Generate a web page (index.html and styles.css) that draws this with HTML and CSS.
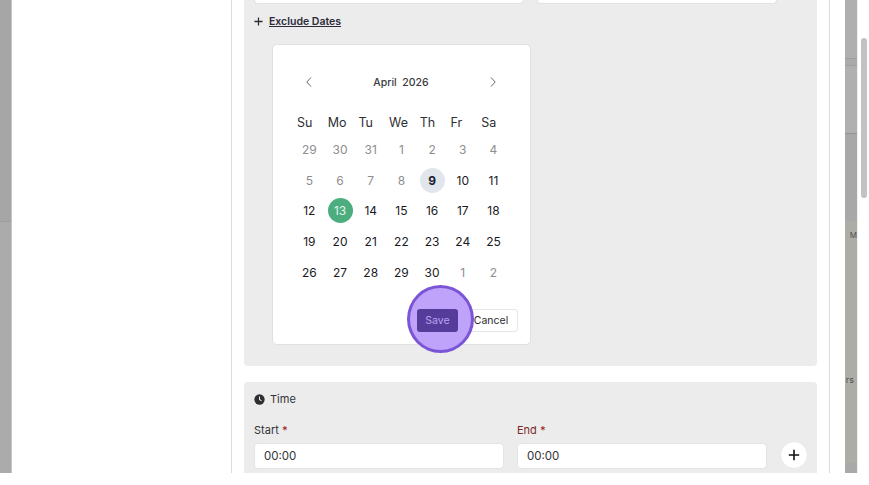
FILE: index.html
```html
<!DOCTYPE html>
<html lang="en">
<head>
  <meta charset="UTF-8">
  <title>Exclude Dates</title>
  <link rel="stylesheet" href="styles.css">
</head>
<body>
  <div class="frame">
    <div class="strip-left"><div class="strip-dark"></div></div>
    <div class="sidebar"></div>
    <div class="main">
      <section class="panel panel-date">
        <div class="row-inputs">
          <div class="input-stub input-stub-a"></div>
          <div class="input-stub input-stub-b"></div>
        </div>
        <div class="exclude">
          <svg class="plus-small" viewBox="0 0 10 10"><path d="M5 .5v9M.5 5h9"/></svg>
          <a class="exclude-link">Exclude Dates</a>
        </div>
        <div class="calendar">
          <div class="cal-nav">
            <svg class="chev" viewBox="0 0 8 12"><path d="M6 1.5 1.8 6 6 10.5"/></svg>
            <span class="cal-title">April&nbsp; 2026</span>
            <svg class="chev" viewBox="0 0 8 12"><path d="M2 1.5 6.2 6 2 10.5"/></svg>
          </div>
          <div class="cal-grid cal-head">
            <span>Su</span><span>Mo</span><span>Tu</span><span>We</span><span>Th</span><span>Fr</span><span>Sa</span>
          </div>
          <div class="cal-grid cal-days">
            <span class="off">29</span><span class="off">30</span><span class="off">31</span><span class="off">1</span><span class="off">2</span><span class="off">3</span><span class="off">4</span>
            <span class="off">5</span><span class="off">6</span><span class="off">7</span><span class="off">8</span><span class="today">9</span><span>10</span><span>11</span>
            <span>12</span><span class="picked">13</span><span>14</span><span>15</span><span>16</span><span>17</span><span>18</span>
            <span>19</span><span>20</span><span>21</span><span>22</span><span>23</span><span>24</span><span>25</span>
            <span>26</span><span>27</span><span>28</span><span>29</span><span>30</span><span class="off">1</span><span class="off">2</span>
          </div>
          <div class="cal-actions">
            <button class="btn-save">Save</button>
            <button class="btn-cancel">Cancel</button>
            <div class="spot"></div>
          </div>
        </div>
      </section>
      <section class="panel panel-time">
        <div class="time-title">
          <svg class="clock" viewBox="0 0 12 12"><circle cx="6" cy="6" r="5.6"/><path d="M6 2.8V6l2.2 1.6"/></svg>
          <span>Time</span>
        </div>
        <div class="time-row">
          <div class="field field-start">
            <label>Start <b>*</b></label>
            <div class="time-input">00:00</div>
          </div>
          <div class="field field-end">
            <label class="label-error">End <b>*</b></label>
            <div class="time-input">00:00</div>
          </div>
          <div class="add-btn">
            <svg viewBox="0 0 12 12"><path d="M6 .8v10.4M.8 6h10.4"/></svg>
          </div>
        </div>
      </section>
    </div>
    <div class="gutter"></div>
    <div class="strip-right">
      <div class="sr-a"></div>
      <div class="sr-b"></div>
      <div class="sr-c"></div>
      <div class="sr-d"></div>
      <div class="sr-e">
        <span class="sr-m">M</span>
        <span class="sr-rs">rs</span>
      </div>
      <div class="sr-f"></div>
    </div>
    <div class="scrollbar"><div class="thumb"></div></div>
  </div>
</body>
</html>
```

FILE: styles.css
```css
html, body {
  margin: 0;
  height: 100%;
  background: #fff;
  overflow: hidden;
}
body {
  font-family: 'Inter', 'Liberation Sans', sans-serif;
  color: #2a2a2e;
}
.frame {
  display: flex;
  height: 473px;
  overflow: hidden;
}
.strip-left {
  width: 12px;
  background: #ababab;
  border-right: 1px solid #c4c4c4;
  box-sizing: border-box;
}
.strip-dark {
  height: 221px;
  background: #a6a6a6;
  border-bottom: 1px solid #9f9f9f;
}
.sidebar {
  width: 219px;
  background: #fff;
}
.main {
  width: 599px;
  box-sizing: border-box;
  border-left: 1px solid #dcdcdc;
  border-right: 1px solid #dcdcdc;
  padding: 0 12px;
  background: #fff;
}
.panel {
  background: #ececec;
  border-radius: 0 0 4px 4px;
  padding: 0 10px;
}
.panel-date {
  height: 366px;
}
.panel-time {
  margin-top: 16px;
  height: 91px;
  padding-right: 9px;
  border-radius: 4px 4px 0 0;
}
.row-inputs {
  display: flex;
  gap: 13px;
}
.input-stub {
  height: 4px;
  background: #fff;
  border: 1px solid #e2e2e2;
  border-top: 0;
  border-radius: 0 0 5px 5px;
  box-sizing: border-box;
}
.input-stub-a { width: 270px; }
.input-stub-b { width: 240px; }
.exclude {
  display: flex;
  align-items: center;
  gap: 6px;
  height: 16px;
  margin-top: 9px;
}
.plus-small {
  width: 9px;
  height: 9px;
  fill: none;
  stroke: #2c2c34;
  stroke-width: 1.4;
}
.exclude-link {
  font-size: 10.5px;
  font-weight: 600;
  color: #2b2b3a;
  text-decoration: underline;
}
.calendar {
  width: 259px;
  height: 301px;
  margin: 15px 0 0 18px;
  box-sizing: border-box;
  background: #fff;
  border: 1px solid #e0e0e0;
  border-radius: 5px;
  padding: 27px 12px 0 21px;
}
.cal-nav {
  display: flex;
  justify-content: space-between;
  align-items: center;
  height: 20px;
  width: 192px;
  padding-left: 11px;
}
.chev {
  width: 8px;
  height: 12px;
  fill: none;
  stroke: #666;
  stroke-width: 1;
}
.cal-title {
  font-size: 10.5px;
  font-weight: 500;
  color: #3a3a3f;
}
.cal-grid {
  display: grid;
  grid-template-columns: repeat(7, 30.7px);
}
.cal-head {
  margin-top: 20px;
  height: 20px;
  align-items: center;
}
.cal-head span {
  padding-left: 3px;
  font-size: 12.5px;
  font-weight: 400;
  color: #2f2f33;
}
.cal-days {
  margin-top: 2px;
  grid-auto-rows: 30.7px;
}
.cal-days span {
  display: flex;
  align-items: center;
  justify-content: center;
  font-size: 12px;
  font-weight: 400;
  color: #1a1a1e;
}
.cal-days .off {
  color: #8e8e8e;
}
.cal-days .today {
  width: 25px;
  height: 25px;
  margin: auto;
  border-radius: 50%;
  background: #e1e5ec;
  font-weight: 700;
  color: #1d2230;
}
.cal-days .picked {
  width: 25px;
  height: 25px;
  margin: auto;
  border-radius: 50%;
  background: #4cad7f;
  color: #e6f5ee;
}
.cal-actions {
  position: relative;
  display: flex;
  justify-content: flex-end;
  gap: 6px;
  margin-top: 22px;
}
.cal-actions button {
  height: 23px;
  border-radius: 3px;
  font-family: inherit;
  font-size: 10.5px;
  padding: 0;
}
.btn-save {
  position: relative;
  z-index: 2;
  width: 41px;
  background: #553c9a;
  border: 0;
  color: #b9a2ee;
}
.btn-cancel {
  width: 54px;
  background: #fff;
  border: 1px solid #e6e6e6;
  color: #2a2a2e;
}
/* highlight ring round the Save button */
.spot {
  position: absolute;
  z-index: 1;
  right: 44px;
  top: -24px;
  width: 67px;
  height: 68px;
  box-sizing: border-box;
  border: 3px solid #7a55d6;
  border-radius: 50%;
  background: #bfa3fa;
}
.time-title {
  display: flex;
  align-items: center;
  gap: 5px;
  padding-top: 9px;
  height: 16px;
  font-size: 11px;
  color: #333338;
}
.clock {
  width: 11px;
  height: 11px;
}
.clock circle { fill: #2f2f33; }
.clock path {
  fill: none;
  stroke: #ececec;
  stroke-width: 1.1;
}
.time-row {
  display: flex;
  align-items: flex-end;
  margin-top: 16px;
}
.field label {
  display: block;
  font-size: 11px;
  color: #333338;
  margin-bottom: 5px;
  height: 15px;
}
.field label b {
  font-weight: 500;
  color: #a11d1d;
}
.field .label-error { color: #7a2a2a; }
.field-start { width: 250px; margin-right: 13px; }
.field-end { width: 250px; margin-right: 14px; }
.time-input {
  height: 26px;
  line-height: 25px;
  box-sizing: border-box;
  background: #fff;
  border: 1px solid #e4e4e4;
  border-radius: 4px;
  padding-left: 9px;
  font-size: 11.5px;
  color: #333338;
}
.add-btn {
  flex: none;
  width: 28px;
  height: 28px;
  margin-left: -1px;
  box-sizing: border-box;
  border-radius: 50%;
  background: #fff;
  border: 1px solid #e8e8e8;
  display: flex;
  align-items: center;
  justify-content: center;
}
.add-btn svg {
  width: 12px;
  height: 12px;
  fill: none;
  stroke: #111;
  stroke-width: 1.6;
}
.gutter {
  width: 15px;
  background: #fff;
}
.strip-right {
  width: 12px;
  display: flex;
  flex-direction: column;
}
.sr-a { height: 58px; background: #afafaf; border-bottom: 1px solid #9d9d9d; }
.sr-b { height: 6px; background: #aaa; border-bottom: 1px solid #a0a0a0; }
.sr-c { height: 67px; background: #b0b0b0; border-bottom: 1px solid #939393; }
.sr-d { height: 87px; background: #a8a8a8; }
.sr-e {
  flex: 1;
  display: flex;
  flex-direction: column;
  align-items: flex-end;
  background: #adada8;
  font-size: 8px;
  color: #4f4f4f;
  overflow: hidden;
}
.sr-f { height: 10px; background: #a9a9a9; }
.sr-m { margin-top: 9px; }
.sr-rs { margin: 134px 3px 0 0; font-size: 9px; }
.scrollbar {
  width: 12px;
  background: #fff;
  border-left: 1px solid #f0f0f0;
  box-sizing: border-box;
}
.thumb {
  width: 6px;
  height: 160px;
  margin: 38px 0 0 3px;
  border-radius: 3px;
  background: #c2c2c2;
}
```
